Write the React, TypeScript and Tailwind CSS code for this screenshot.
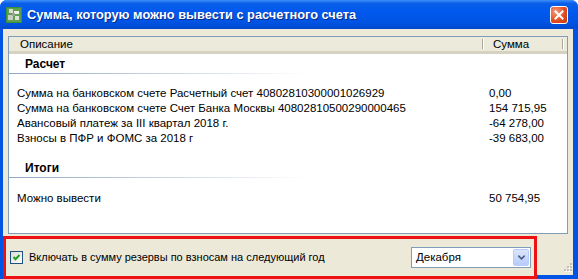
import { ChevronDown } from 'lucide-react'

const calcRows = [
  { label: 'Сумма на банковском счете Расчетный счет 40802810300001026929', value: '0,00' },
  { label: 'Сумма на банковском счете Счет Банка Москвы 40802810500290000465', value: '154 715,95' },
  { label: 'Авансовый платеж за III квартал 2018 г.', value: '-64 278,00' },
  { label: 'Взносы в ПФР и ФОМС за 2018 г', value: '-39 683,00' },
]

function AppIcon() {
  return (
    <svg width="16" height="16" viewBox="0 0 16 16">
      <rect x="0" y="0" width="16" height="16" fill="#3f8f3a" />
      <rect x="1" y="1" width="14" height="14" fill="#5aa04e" />
      <rect x="3" y="2" width="4" height="4" fill="#d8dcd0" />
      <rect x="8" y="4" width="5" height="3" fill="#eef0ea" />
      <rect x="2" y="8" width="5" height="5" fill="#c9cdc2" />
      <rect x="9" y="9" width="4" height="4" fill="#dfe3d8" />
      <rect x="6" y="6" width="3" height="3" fill="#9aa394" />
    </svg>
  )
}

function SectionTitle({ title, className }: { title: string; className: string }) {
  return (
    <div className={className}>
      <p className="h-[17px] pl-[16px] text-[12px] font-bold leading-[17px] text-black">{title}</p>
      <div className="h-px w-[300px] bg-[linear-gradient(to_right,#8fa7c2,#ffffff)]" />
    </div>
  )
}

function Row({ label, value }: { label: string; value: string }) {
  return (
    <div className="flex h-[15px] items-center text-[11.5px] leading-[15px] text-black">
      <span className="w-[480px] shrink-0 pl-[8px]">{label}</span>
      <span>{value}</span>
    </div>
  )
}

export default function App() {
  return (
    <div className="flex h-[279px] w-[578px] flex-col overflow-hidden rounded-t-[7px] bg-[#0054e3] font-['Liberation_Sans',Arial,sans-serif]">
      <div className="flex h-[29px] shrink-0 items-center bg-[linear-gradient(to_bottom,#3d8ff8_0%,#0a5fe8_12%,#0058ee_40%,#0054e3_75%,#0049cf_100%)] pl-[6px] pr-[10px]">
        <AppIcon />
        <p className="ml-[5px] text-[12.8px] font-bold text-white [text-shadow:1px_1px_0_#0a2a8a]">
          Сумма, которую можно вывести с расчетного счета
        </p>
        <div className="ml-auto flex h-[18px] w-[18px] items-center justify-center rounded-[3px] border border-white bg-[radial-gradient(circle_at_30%_30%,#f49a7a,#e0491b_60%,#c53a10)]">
          <svg width="10" height="10" viewBox="0 0 10 10">
            <path d="M1.5 1.5 L8.5 8.5 M8.5 1.5 L1.5 8.5" stroke="white" strokeWidth="2" strokeLinecap="square" />
          </svg>
        </div>
      </div>

      <div className="ml-[3px] mr-[5px] flex flex-1 flex-col bg-[#ece9d8]">
        <div className="mx-[5px] mt-[7px] h-[198px] border border-[#7f9db9] bg-white">
          <div className="flex h-[17px] border-b-[3px] border-[#d6d2c2] bg-[#ebeadb] text-[11.5px] leading-[14px] text-black">
            <div className="flex w-[473px] items-center pl-[11px]">Описание</div>
            <div className="my-[2px] w-px bg-[#aca899]" />
            <div className="my-[2px] w-px bg-white" />
            <div className="flex w-[78px] items-center pl-[9px]">Сумма</div>
            <div className="my-[2px] w-px bg-[#aca899]" />
            <div className="my-[2px] w-px bg-white" />
          </div>
          <SectionTitle title="Расчет" className="mt-[2px]" />
          <div className="mt-[12px]">
            {calcRows.map((r) => (
              <Row key={r.label} label={r.label} value={r.value} />
            ))}
          </div>
          <SectionTitle title="Итоги" className="mt-[14px]" />
          <div className="mt-[13px]">
            <Row label="Можно вывести" value="50 754,95" />
          </div>
        </div>

        <div className="mt-[2px] flex flex-1">
          <div className="flex w-[534px] items-center border-[3px] border-[#ee1111] pl-[4px] pr-[3px]">
            <svg width="13" height="13" viewBox="0 0 13 13" className="shrink-0">
              <defs>
                <linearGradient id="cb" x1="0" y1="0" x2="1" y2="1">
                  <stop offset="0" stopColor="#dcdbd5" />
                  <stop offset="1" stopColor="#ffffff" />
                </linearGradient>
              </defs>
              <rect x="0.5" y="0.5" width="12" height="12" fill="url(#cb)" stroke="#1c5180" />
              <path d="M3.5 6 L5.5 8.2 L9.5 4" fill="none" stroke="#21a121" strokeWidth="2" />
            </svg>
            <span className="ml-[6px] text-[11px] text-black">Включать в сумму резервы по взносам на следующий год</span>
            <div className="ml-auto flex h-[21px] w-[120px] items-center border border-[#7f9db9] bg-white pl-[4px] pr-px">
              <span className="text-[11.5px] text-black">Декабря</span>
              <div className="ml-auto flex h-[17px] w-[16px] items-center justify-center rounded-[2px] border border-[#b9ccf9] bg-[linear-gradient(to_bottom,#dce6fd,#b7cbfa)]">
                <ChevronDown size={11} strokeWidth={3.5} className="text-[#4d6185]" />
              </div>
            </div>
          </div>
          <div className="flex flex-1 flex-col">
            <div className="flex flex-1 items-end justify-end pb-[2px] pr-[1px]">
              <svg width="10" height="10" viewBox="0 0 10 10">
                {[
                  [8, 0],
                  [5, 3],
                  [8, 3],
                  [2, 6],
                  [5, 6],
                  [8, 6],
                ].map(([x, y]) => (
                  <g key={`${x}-${y}`}>
                    <rect x={x + 1} y={y + 1} width="2" height="2" fill="#ffffff" />
                    <rect x={x} y={y} width="2" height="2" fill="#c1beb3" />
                  </g>
                ))}
              </svg>
            </div>
            <div className="h-[4px] bg-[#0054e3]" />
          </div>
        </div>
      </div>
    </div>
  )
}
